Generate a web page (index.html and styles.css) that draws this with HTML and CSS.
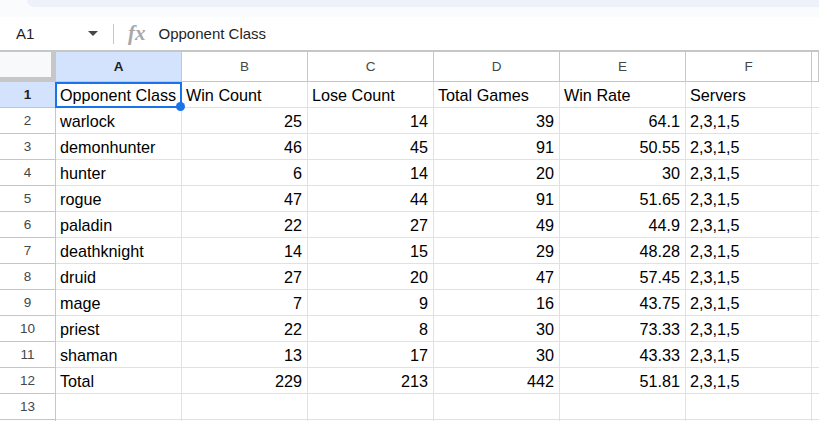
FILE: index.html
```html
<!DOCTYPE html>
<html lang="en">
<head>
    <meta charset="UTF-8">
    <meta name="viewport" content="width=device-width, initial-scale=1.0">
    <title>Opponent Stats</title>
    <link rel="stylesheet" href="styles.css">
</head>
<body>
    <div class="topbar"><div class="topbar-fill"></div></div>

    <div class="formula-bar">
        <div class="name-box">
            <span>A1</span>
            <span class="arrow"></span>
        </div>
        <span class="divider"></span>
        <span class="fx">fx</span>
        <span class="formula">Opponent Class</span>
    </div>

    <div class="sheet">
        <div class="row head">
            <div class="corner"></div>
            <div class="col selected">A</div>
            <div class="col">B</div>
            <div class="col">C</div>
            <div class="col">D</div>
            <div class="col">E</div>
            <div class="col">F</div>
            <div class="col"></div>
        </div>
        <div class="row">
            <div class="rh selected">1</div>
            <div class="cell active">Opponent Class<span class="handle"></span></div>
            <div class="cell">Win Count</div>
            <div class="cell">Lose Count</div>
            <div class="cell">Total Games</div>
            <div class="cell">Win Rate</div>
            <div class="cell">Servers</div>
            <div class="cell"></div>
        </div>
        <div class="row">
            <div class="rh">2</div>
            <div class="cell">warlock</div>
            <div class="cell num">25</div>
            <div class="cell num">14</div>
            <div class="cell num">39</div>
            <div class="cell num">64.1</div>
            <div class="cell">2,3,1,5</div>
            <div class="cell"></div>
        </div>
        <div class="row">
            <div class="rh">3</div>
            <div class="cell">demonhunter</div>
            <div class="cell num">46</div>
            <div class="cell num">45</div>
            <div class="cell num">91</div>
            <div class="cell num">50.55</div>
            <div class="cell">2,3,1,5</div>
            <div class="cell"></div>
        </div>
        <div class="row">
            <div class="rh">4</div>
            <div class="cell">hunter</div>
            <div class="cell num">6</div>
            <div class="cell num">14</div>
            <div class="cell num">20</div>
            <div class="cell num">30</div>
            <div class="cell">2,3,1,5</div>
            <div class="cell"></div>
        </div>
        <div class="row">
            <div class="rh">5</div>
            <div class="cell">rogue</div>
            <div class="cell num">47</div>
            <div class="cell num">44</div>
            <div class="cell num">91</div>
            <div class="cell num">51.65</div>
            <div class="cell">2,3,1,5</div>
            <div class="cell"></div>
        </div>
        <div class="row">
            <div class="rh">6</div>
            <div class="cell">paladin</div>
            <div class="cell num">22</div>
            <div class="cell num">27</div>
            <div class="cell num">49</div>
            <div class="cell num">44.9</div>
            <div class="cell">2,3,1,5</div>
            <div class="cell"></div>
        </div>
        <div class="row">
            <div class="rh">7</div>
            <div class="cell">deathknight</div>
            <div class="cell num">14</div>
            <div class="cell num">15</div>
            <div class="cell num">29</div>
            <div class="cell num">48.28</div>
            <div class="cell">2,3,1,5</div>
            <div class="cell"></div>
        </div>
        <div class="row">
            <div class="rh">8</div>
            <div class="cell">druid</div>
            <div class="cell num">27</div>
            <div class="cell num">20</div>
            <div class="cell num">47</div>
            <div class="cell num">57.45</div>
            <div class="cell">2,3,1,5</div>
            <div class="cell"></div>
        </div>
        <div class="row">
            <div class="rh">9</div>
            <div class="cell">mage</div>
            <div class="cell num">7</div>
            <div class="cell num">9</div>
            <div class="cell num">16</div>
            <div class="cell num">43.75</div>
            <div class="cell">2,3,1,5</div>
            <div class="cell"></div>
        </div>
        <div class="row">
            <div class="rh">10</div>
            <div class="cell">priest</div>
            <div class="cell num">22</div>
            <div class="cell num">8</div>
            <div class="cell num">30</div>
            <div class="cell num">73.33</div>
            <div class="cell">2,3,1,5</div>
            <div class="cell"></div>
        </div>
        <div class="row">
            <div class="rh">11</div>
            <div class="cell">shaman</div>
            <div class="cell num">13</div>
            <div class="cell num">17</div>
            <div class="cell num">30</div>
            <div class="cell num">43.33</div>
            <div class="cell">2,3,1,5</div>
            <div class="cell"></div>
        </div>
        <div class="row">
            <div class="rh">12</div>
            <div class="cell">Total</div>
            <div class="cell num">229</div>
            <div class="cell num">213</div>
            <div class="cell num">442</div>
            <div class="cell num">51.81</div>
            <div class="cell">2,3,1,5</div>
            <div class="cell"></div>
        </div>
        <div class="row">
            <div class="rh">13</div>
            <div class="cell"></div>
            <div class="cell"></div>
            <div class="cell"></div>
            <div class="cell"></div>
            <div class="cell"></div>
            <div class="cell"></div>
            <div class="cell"></div>
        </div>
        <div class="row">
            <div class="rh"></div>
            <div class="cell"></div>
            <div class="cell"></div>
            <div class="cell"></div>
            <div class="cell"></div>
            <div class="cell"></div>
            <div class="cell"></div>
            <div class="cell"></div>
        </div>
    </div>
</body>
</html>
```

FILE: styles.css
```css
/* base */
body {
    margin: 0;
    overflow: hidden;
    background: #fff;
    font-family: "Liberation Sans", Arial, sans-serif;
    color: #000;
}

/* top strip above the formula bar */
.topbar {
    height: 17px;
    background: #f9fbfd;
    padding-left: 27px;
}

.topbar-fill {
    height: 7px;
    background: #edf2fa;
    border-bottom-left-radius: 8px;
}

/* formula bar */
.formula-bar {
    height: 33px;
    display: flex;
    align-items: center;
    border-bottom: 2px solid #c4c7c5;
    font-size: 15px;
    color: #1f1f1f;
}

.name-box {
    width: 98px;
    box-sizing: border-box;
    padding-left: 16px;
    display: flex;
    align-items: center;
    justify-content: space-between;
}

.arrow {
    width: 0;
    height: 0;
    border-left: 5px solid transparent;
    border-right: 5px solid transparent;
    border-top: 5px solid #444746;
}

.divider {
    width: 1px;
    height: 20px;
    margin-left: 15px;
    background: #c4c7c5;
}

.fx {
    margin-left: 14px;
    font-family: "Liberation Serif", "Times New Roman", serif;
    font-style: italic;
    font-weight: bold;
    font-size: 21px;
    color: #a6a8aa;
    line-height: 1;
}

.formula {
    margin-left: 13px;
}

/* grid */
.row {
    display: grid;
    grid-template-columns: 56px repeat(6, 126px) 1fr;
    height: 26px;
}

.row.head {
    height: 30px;
}

.corner {
    background: #f8f9fa;
    border-right: 5px solid #c7c7c7;
    border-bottom: 5px solid #c7c7c7;
}

.col,
.rh {
    border-right: 1px solid #c4c7c5;
    border-bottom: 1px solid #c4c7c5;
    text-align: center;
    font-size: 13.5px;
    color: #444746;
}

.col {
    line-height: 29px;
}

.rh {
    line-height: 25px;
}

.col.selected,
.rh.selected {
    background: #d3e3fd;
    color: #1f1f1f;
    font-weight: bold;
}

.cell {
    border-right: 1px solid #e1e1e1;
    border-bottom: 1px solid #e1e1e1;
    padding: 1px 5px 0 4px;
    line-height: 24px;
    font-size: 16.2px;
    white-space: nowrap;
}

.num {
    text-align: right;
}

/* active cell outline */
.active {
    position: relative;
}

.active::before {
    content: "";
    position: absolute;
    left: -1px;
    top: 0;
    right: -1px;
    bottom: -1px;
    border: 2px solid #1a73e8;
}

.handle {
    position: absolute;
    right: -4px;
    bottom: -4px;
    width: 9px;
    height: 9px;
    border-radius: 50%;
    background: #1a73e8;
    z-index: 2;
}
```
